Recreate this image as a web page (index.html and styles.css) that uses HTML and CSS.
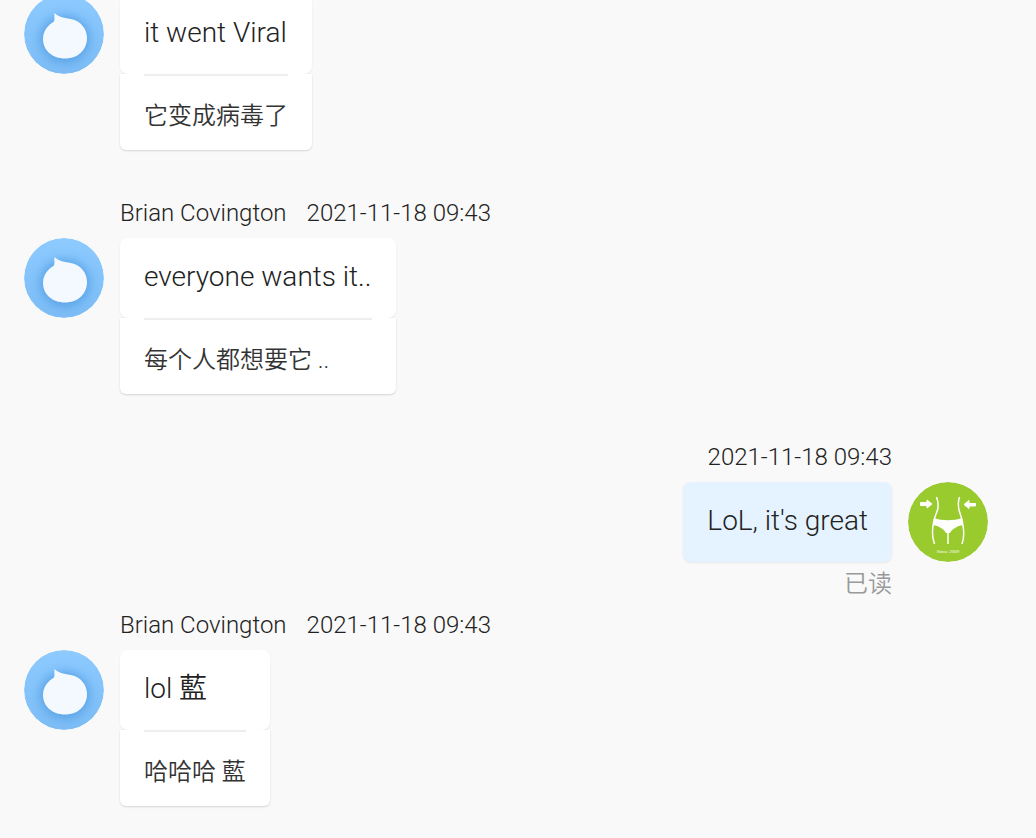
FILE: index.html
```
<!DOCTYPE html>
<html lang="zh-CN">
<head>
    <meta charset="utf-8">
    <meta name="viewport" content="width=device-width, initial-scale=1">
    <title>Chat</title>
    <link rel="stylesheet" href="styles.css">
</head>
<body>
<!-- shared avatar drawing -->
<svg class="defs" aria-hidden="true">
    <defs>
        <linearGradient id="sky" x1="0" y1="0" x2="0" y2="1">
            <stop offset="0" stop-color="#8ccaff"/>
            <stop offset="1" stop-color="#7dbdf6"/>
        </linearGradient>
        <filter id="glow" x="-50%" y="-50%" width="200%" height="200%">
            <feGaussianBlur stdDeviation="5"/>
        </filter>
        <filter id="soft">
            <feGaussianBlur stdDeviation="0.7"/>
        </filter>
        <symbol id="drop" viewBox="0 0 80 80">
            <circle cx="40" cy="40" r="40" fill="url(#sky)"/>
            <ellipse cx="41" cy="45" rx="25" ry="24" fill="#4b98df" opacity=".7" filter="url(#glow)"/>
            <path d="M30.500 19C33 22 39 24 47 25C57 27 63 35 63 44C63 56 54 64.500 41 64.500C28 64.500 19 56 19 45C19 37 24 31 30 27.500C31 25 30 22 30.500 19Z" fill="#f3f9ff" filter="url(#soft)"/>
        </symbol>
    </defs>
</svg>

<main class="chat">
    <article class="message">
        <div class="row">
            <svg class="avatar" role="img" aria-label="Brian Covington"><use href="#drop"/></svg>
            <div class="content">
                <p class="bubble">it went Viral</p>
                <div class="translation"><p>它变成病毒了</p></div>
            </div>
        </div>
        <footer class="status"></footer>
    </article>

    <article class="message">
        <header class="meta">
            <span>Brian Covington</span>
            <time datetime="2021-11-18T09:43">2021-11-18 09:43</time>
        </header>
        <div class="row">
            <svg class="avatar" role="img" aria-label="Brian Covington"><use href="#drop"/></svg>
            <div class="content">
                <p class="bubble">everyone wants it..</p>
                <div class="translation"><p>每个人都想要它 ..</p></div>
            </div>
        </div>
        <footer class="status"></footer>
    </article>

    <article class="message own">
        <header class="meta">
            <time datetime="2021-11-18T09:43">2021-11-18 09:43</time>
        </header>
        <div class="row">
            <svg class="avatar" viewBox="0 0 80 80" role="img" aria-label="Me">
                <circle cx="40" cy="40" r="40" fill="#99cb2f"/>
                <path d="M12.500 20.500H19V18L24 22L19 26V23.500H12.500Z M67.500 21.500H61V18.500L56 22.500L61 26.500V24H67.500Z" fill="#fff" stroke="#fff" stroke-linejoin="round"/>
                <path d="M28.500 15C30 19 31 23 29.500 28C28 33 26 36 25.500 41C24 48 24 55 26.500 62M51.500 15C50 19 50 23 51 28C52.500 33 54 36 54.500 41C56 48 57 54 54 62M40 49V62" fill="none" stroke="#fff" stroke-width="1.500"/>
                <path d="M26 36C34 39 46 39 54 36L55 43C49 44 44 47 42 51H38C36 47 31 44 25 43Z" fill="#fff"/>
                <text class="since" x="40" y="71">Since 2009</text>
            </svg>
            <div class="content">
                <p class="bubble">LoL, it's great</p>
            </div>
        </div>
        <footer class="status">已读</footer>
    </article>

    <article class="message">
        <header class="meta">
            <span>Brian Covington</span>
            <time datetime="2021-11-18T09:43">2021-11-18 09:43</time>
        </header>
        <div class="row">
            <svg class="avatar" role="img" aria-label="Brian Covington"><use href="#drop"/></svg>
            <div class="content">
                <p class="bubble">lol 藍</p>
                <div class="translation"><p>哈哈哈 藍</p></div>
            </div>
        </div>
    </article>
</main>
</body>
</html>
```
FILE: styles.css
```
* {
    box-sizing: border-box;
}

body {
    margin: 0;
    background: #f9f9f9;
    color: #222;
    font-family: Roboto, "Noto Sans CJK SC", sans-serif;
    font-weight: 350;
}

p {
    margin: 0;
}

.defs {
    position: absolute;
    width: 0;
    height: 0;
}

/* keeps the newest message at the bottom */
.chat {
    display: flex;
    flex-direction: column;
    justify-content: flex-end;
    height: 100vh;
    padding: 0 48px 32px 24px;
    overflow: hidden;
}

.message {
    flex-shrink: 0;
}

.meta {
    display: flex;
    gap: 20px;
    height: 48px;
    padding: 7px 96px 9px;
    font-size: 24px;
    line-height: 32px;
}

.row {
    display: flex;
    align-items: flex-start;
    gap: 16px;
}

.avatar {
    flex: none;
    width: 80px;
    height: 80px;
    border-radius: 50%;
}

.bubble {
    height: 80px;
    padding: 19px 24px 21px;
    border-radius: 8px;
    background: #fff;
    box-shadow: 0 1px 2px rgba(0, 0, 0, 0.08);
    font-size: 28px;
    line-height: 40px;
}

.translation {
    padding: 0 24px;
    border-radius: 0 0 6px 6px;
    background: #fff;
    box-shadow: 0 1px 2px rgba(0, 0, 0, 0.15);
    color: #333;
    font-size: 24px;
}

.translation p {
    padding: 20px 0 14px;
    border-top: 2px solid #eee;
    line-height: 40px;
}

.status {
    height: 40px;
    padding: 2px 96px 0;
    color: #999;
    font-size: 24px;
    line-height: 40px;
}

.own .meta {
    justify-content: flex-end;
}

.own .row {
    flex-direction: row-reverse;
}

.own .bubble {
    background: #e5f2ff;
}

.own .status {
    text-align: right;
}

.since {
    fill: #fff;
    font-family: "Liberation Serif", serif;
    font-size: 5px;
    font-weight: 400;
    text-anchor: middle;
}
```
